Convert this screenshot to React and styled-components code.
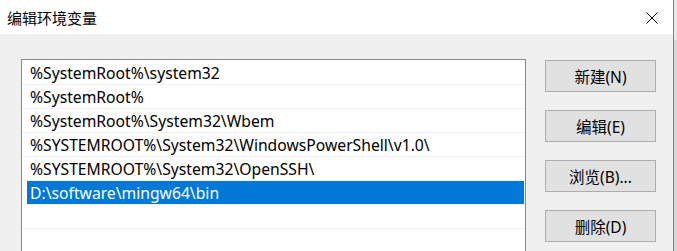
import React from 'react'
import styled, { createGlobalStyle } from 'styled-components'

const Global = createGlobalStyle`
  html, body {
    margin: 0;
    padding: 0;
    background: #dcdcdc;
    overflow: hidden;
  }
  body {
    font-family: "Noto Sans", "Noto Sans CJK SC", sans-serif;
    font-size: 15px;
    color: #000;
  }
`

const Screen = styled.div`
  display: flex;
  width: 677px;
  height: 251px;
`

const Window = styled.section`
  display: flex;
  flex-direction: column;
  width: 673px;
  height: 251px;
  background: #f0f0f0;
  border-right: 1px solid #7f7f7f;
  overflow: hidden;
`

const BackStrip = styled.div`
  flex: 1;
  background: #d6d6d6;
  border-top: 40px solid #e8e8e8;
`

const TitleBar = styled.header`
  display: flex;
  align-items: center;
  justify-content: space-between;
  height: 34px;
  flex-shrink: 0;
  background: #fff;
  padding: 0 15px 0 7px;
`

const Title = styled.span`
  font-family: "Noto Sans CJK SC", sans-serif;
  font-size: 15px;
  line-height: 15px;
  margin-top: 1px;
`

const CloseIcon = styled.svg`
  display: block;
  width: 12px;
  height: 12px;
  margin-top: 1px;
`

const Body = styled.div`
  display: flex;
  align-items: flex-start;
  gap: 19px;
  padding: 25px 0 0 21px;
`

const ListBox = styled.ul`
  list-style: none;
  margin: 0;
  padding: 1px 1px 0 0;
  width: 502px;
  height: 220px;
  background: #fff;
  border: 1px solid #828790;
`

const Row = styled.li`
  display: flex;
  height: 23px;
  border-bottom: 1px solid #f0f0f0;
`

const Cell = styled.span`
  flex: 1;
  margin-left: 5px;
  padding-left: 3px;
  font-size: 15.7px;
  line-height: 24px;
  white-space: nowrap;
  overflow: hidden;
  background: ${p => (p.selected ? '#0078d7' : 'transparent')};
  color: ${p => (p.selected ? '#fff' : '#000')};
`

const Buttons = styled.div`
  display: flex;
  flex-direction: column;
  gap: 18px;
  margin-top: 1px;
`

const Button = styled.button`
  width: 111px;
  height: 32px;
  padding: 0;
  background: #e1e1e1;
  border: 1px solid #adadad;
  font-family: "Noto Sans", "Noto Sans CJK SC", sans-serif;
  font-size: 15.5px;
  color: #000;
  cursor: pointer;
`

const paths = [
  '%SystemRoot%\\system32',
  '%SystemRoot%',
  '%SystemRoot%\\System32\\Wbem',
  '%SYSTEMROOT%\\System32\\WindowsPowerShell\\v1.0\\',
  '%SYSTEMROOT%\\System32\\OpenSSH\\',
  'D:\\software\\mingw64\\bin',
  '',
  '',
]

const actions = ['新建(N)', '编辑(E)', '浏览(B)...', '删除(D)']

export default function App() {
  return (
    <Screen>
      <Global />
      <Window>
        <TitleBar>
          <Title>编辑环境变量</Title>
          <CloseIcon viewBox="0 0 12 12">
            <path d="M0.5 0.5 L11.5 11.5 M11.5 0.5 L0.5 11.5" stroke="#000" strokeWidth="1" fill="none" />
          </CloseIcon>
        </TitleBar>
        <Body>
          <ListBox>
            {paths.map((p, i) => (
              <Row key={i}>
                <Cell selected={i === 5}>{p}</Cell>
              </Row>
            ))}
          </ListBox>
          <Buttons>
            {actions.map(a => (
              <Button key={a}>{a}</Button>
            ))}
          </Buttons>
        </Body>
      </Window>
      <BackStrip />
    </Screen>
  )
}
